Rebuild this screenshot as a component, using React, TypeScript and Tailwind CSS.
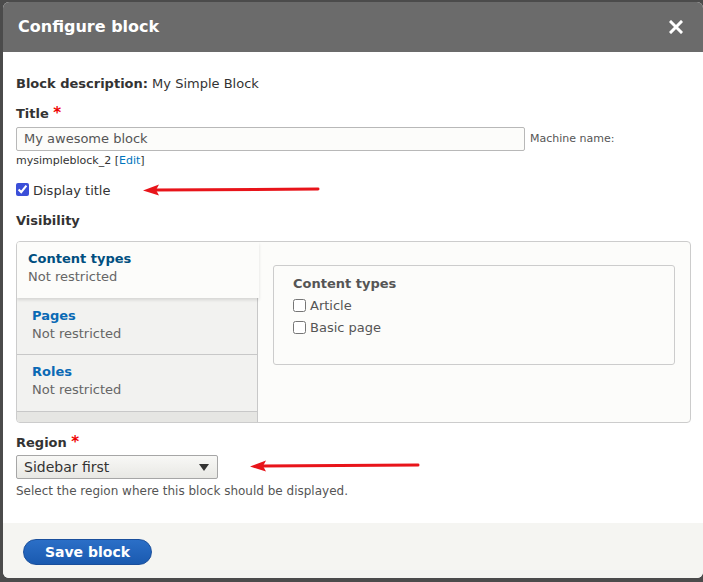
import React from "react";

const font = { fontFamily: '"DejaVu Sans", "Liberation Sans", sans-serif' };

function Arrow({ x1, x2, y }: { x1: number; x2: number; y: number }) {
  return (
    <svg
      className="absolute pointer-events-none"
      style={{ left: x1 - 2, top: y - 8 }}
      width={x2 - x1 + 4}
      height={16}
    >
      <line x1={14} y1={8} x2={x2 - x1 + 2} y2={7} stroke="#e8141a" strokeWidth={3} strokeLinecap="round" />
      <polygon points={`2,8.5 18,2.5 15,8 18,13.5`} fill="#e8141a" />
    </svg>
  );
}

export default function App() {
  return (
    <div className="w-[703px] h-[582px] bg-[#4b4b4b] pl-[3px] pt-[2px] relative overflow-hidden" style={font}>
      <div className="w-[700px] h-[576px] rounded-[6px] overflow-hidden flex flex-col bg-white">
        <div className="h-[50px] bg-[#6b6b6b] flex items-center justify-between pl-[15px] pr-[20px] pb-[1px] shrink-0">
          <span className="text-white font-bold text-[16px]">Configure block</span>
          <svg width="14" height="14" viewBox="0 0 14 14">
            <path d="M2 2 L12 12 M12 2 L2 12" stroke="white" strokeWidth="3" strokeLinecap="square" />
          </svg>
        </div>
        <div className="flex-1 bg-white pl-[13px] pr-[10px] pt-[23px] text-[#333]">
          <div className="text-[13px] leading-[18px]">
            <span className="font-bold">Block description:</span> My Simple Block
          </div>
          <div className="mt-[11px] h-[19px] pt-[1px] text-[13px] leading-[18px] font-bold">
            Title <span className="text-[#e00] text-[15px] leading-none">*</span>
          </div>
          <div className="mt-[4px] flex items-center">
            <div className="w-[509px] h-[24px] border border-[#b8b8b8] bg-[#fcfcfa] rounded-[2px] flex items-center pl-[7px] text-[13px] text-[#555]">
              My awesome block
            </div>
            <span className="ml-[5px] text-[11px] text-[#555]">Machine name:</span>
          </div>
          <div className="mt-[2px] text-[11px] leading-[16px] text-[#333]">
            mysimpleblock_2 [<span className="text-[#0074bd]">Edit</span>]
          </div>
          <div className="mt-[11px] h-[18px] flex items-center">
            <input type="checkbox" defaultChecked className="w-[13px] h-[13px] m-0 accent-[#3b4fd8]" />
            <span className="ml-[4px] text-[13px] leading-[18px] mt-[3px]">Display title</span>
          </div>
          <div className="mt-[14px] text-[13px] leading-[18px] font-bold">Visibility</div>
          <div className="mt-[11px] w-[675px] h-[182px] border border-[#ccc] rounded-[4px] bg-[#fcfcfa] flex overflow-hidden">
            <div className="w-[241px] shrink-0 bg-[#e6e6e3] flex flex-col">
              <div className="h-[56px] bg-[#fcfcfa] pl-[11px] pt-[8px] relative z-10 shadow-[0_2px_3px_rgba(0,0,0,0.12)] w-[242px]">
                <div className="text-[13px] leading-[18px] font-bold text-[#004f80]">Content types</div>
                <div className="text-[13px] leading-[18px] text-[#666]">Not restricted</div>
              </div>
              <div className="h-[57px] bg-[#f2f2f0] border-b border-r border-[#c8c8c8] pl-[15px] pt-[9px]">
                <div className="text-[13px] leading-[18px] font-bold text-[#0a6ab5]">Pages</div>
                <div className="text-[13px] leading-[18px] text-[#666]">Not restricted</div>
              </div>
              <div className="h-[57px] bg-[#f2f2f0] border-b border-r border-[#c8c8c8] pl-[15px] pt-[8px]">
                <div className="text-[13px] leading-[18px] font-bold text-[#0a6ab5]">Roles</div>
                <div className="text-[13px] leading-[18px] text-[#666]">Not restricted</div>
              </div>
              <div className="flex-1 border-r border-[#c8c8c8]"></div>
            </div>
            <div className="flex-1 pl-[15px] pr-[15px] pt-[23px]">
              <div className="h-[100px] border border-[#ccc] rounded-[3px] bg-[#fcfcfa] pl-[19px] pt-[9px]">
                <div className="text-[13px] leading-[18px] font-bold text-[#555]">Content types</div>
                <div className="mt-[3px] flex items-center h-[19px]">
                  <input type="checkbox" className="w-[13px] h-[13px] m-0" />
                  <span className="ml-[4px] text-[13px] text-[#555]">Article</span>
                </div>
                <div className="mt-[3px] flex items-center h-[19px]">
                  <input type="checkbox" className="w-[13px] h-[13px] m-0" />
                  <span className="ml-[4px] text-[13px] text-[#555]">Basic page</span>
                </div>
              </div>
            </div>
          </div>
          <div className="mt-[11px] h-[18px] text-[13px] leading-[18px] font-bold">
            Region <span className="text-[#e00] text-[15px] leading-none">*</span>
          </div>
          <div className="mt-[3px] w-[202px] h-[24px] border border-[#a6a6a6] rounded-[2px] bg-gradient-to-b from-[#f8f8f6] to-[#e8e8e4] flex items-center justify-between pl-[7px] pr-[8px]">
            <span className="text-[14px] text-[#333]">Sidebar first</span>
            <svg width="10" height="7" viewBox="0 0 10 7">
              <polygon points="0,0 10,0 5,7" fill="#333" />
            </svg>
          </div>
          <div className="mt-[4px] text-[12px] leading-[16px] text-[#555]">
            Select the region where this block should be displayed.
          </div>
        </div>
        <div className="h-[55px] bg-[#f5f5f2] shrink-0 flex items-center pl-[20px] pt-[3px]">
          <div className="w-[129px] h-[26px] rounded-full bg-gradient-to-b from-[#2b6fc7] to-[#1a5ab0] border border-[#1a4f9c] flex items-center justify-center text-white font-bold text-[14px]">
            Save block
          </div>
        </div>
      </div>
      <Arrow x1={143} x2={318} y={190} />
      <Arrow x1={250} x2={418} y={466} />
    </div>
  );
}
